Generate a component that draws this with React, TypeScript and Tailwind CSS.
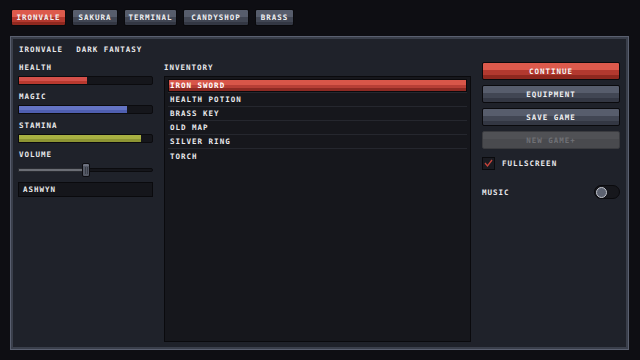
import React from "react";

const font = "font-['DejaVu_Sans_Mono',monospace] font-bold uppercase text-[7.5px] leading-[9px] tracking-[1px]";

const redBevel =
  "bg-[linear-gradient(to_bottom,#dc5a4c_0%,#dc5a4c_45%,#b3392f_45%,#b3392f_78%,#8f281f_78%)]";
const grayBevel =
  "bg-[linear-gradient(to_bottom,#575d6c_0%,#575d6c_45%,#414653_45%,#414653_78%,#333743_78%)]";

function Tab({ label, w, active }: { label: string; w: string; active?: boolean }) {
  return (
    <div
      className={`${w} h-[17px] flex items-center justify-center rounded-[2px] border border-[#0a0a0d] text-[#f0f0f2] ${
        active ? redBevel : grayBevel
      }`}
    >
      {label}
    </div>
  );
}

function Bar({ pct, fill }: { pct: number; fill: string }) {
  return (
    <div className="h-[9px] w-full rounded-r-[2px] border border-[#0b0b0e] bg-[#15161b] p-0">
      <div className={`h-full ${fill}`} style={{ width: `${pct}%` }} />
    </div>
  );
}

function Btn({ label, kind }: { label: string; kind: "red" | "gray" | "off" }) {
  const cls =
    kind === "red"
      ? `${redBevel} text-[#f3f3f5] border-[#0a0a0d]`
      : kind === "gray"
      ? `${grayBevel} text-[#f0f0f2] border-[#0a0a0d]`
      : "bg-[linear-gradient(to_bottom,#505155_0%,#505155_45%,#494a4e_45%)] text-[#707176] border-[#3a3b3f]";
  return (
    <div className={`h-[18px] w-full rounded-[2px] border flex items-center justify-center ${cls}`}>
      {label}
    </div>
  );
}

export default function App() {
  const items = ["Iron Sword", "Health Potion", "Brass Key", "Old Map", "Silver Ring", "Torch"];
  return (
    <div className={`w-[640px] h-[360px] bg-[#0e0e13] overflow-hidden ${font}`}>
      <div className="flex gap-[6px] pt-[9px] pl-[11px]">
        <Tab label="Ironvale" w="w-[55px]" active />
        <Tab label="Sakura" w="w-[46px]" />
        <Tab label="Terminal" w="w-[53px]" />
        <Tab label="Candyshop" w="w-[66px]" />
        <Tab label="Brass" w="w-[39px]" />
      </div>

      <div className="mt-[10px] ml-[10px] w-[619px] h-[314px] bg-[#5a6070] p-[1px]">
        <div className="h-full w-full border-2 border-[#3a3f4b] bg-[#1f222a] px-[5px] pt-[6px] pb-[5px] flex flex-col text-[#e9e9ec]">
          <div className="flex h-[8px] gap-[13px] pl-[1px]">
            <span>Ironvale</span>
            <span>Dark Fantasy</span>
          </div>

          <div className="mt-[9px] flex flex-1 min-h-0 gap-[11px]">
            {/* left column */}
            <div className="w-[135px] shrink-0 pt-[1px] flex flex-col">
              <div className="h-[8px] pl-[1px]">Health</div>
              <div className="mt-[5px]">
                <Bar pct={51} fill="bg-[linear-gradient(to_bottom,#d4504a_0%,#d4504a_60%,#b9392f_60%)]" />
              </div>
              <div className="mt-[7px] h-[8px] pl-[1px]">Magic</div>
              <div className="mt-[5px]">
                <Bar pct={81} fill="bg-[linear-gradient(to_bottom,#6474c4_0%,#6474c4_60%,#4f5fb0_60%)]" />
              </div>
              <div className="mt-[7px] h-[8px] pl-[1px]">Stamina</div>
              <div className="mt-[5px]">
                <Bar pct={92} fill="bg-[linear-gradient(to_bottom,#a8b042_0%,#a8b042_60%,#8d9533_60%)]" />
              </div>
              <div className="mt-[7px] h-[8px] pl-[1px]">Volume</div>
              <div className="mt-[5px] h-[14px] relative flex items-center">
                <div className="flex w-full h-[4px]">
                  <div className="h-full w-[50%] bg-[#6b6e75] border-y border-l border-[#2a2c32]" />
                  <div className="h-full flex-1 bg-[#15161b] border border-[#0b0b0e] rounded-r-[2px]" />
                </div>
                <div className="absolute left-[64px] top-0 h-[14px] w-[8px] rounded-[2px] border border-[#0c0c10] bg-[linear-gradient(to_bottom,#6d7280_0%,#6d7280_20%,#555a66_20%)] flex justify-center gap-[1px] pt-[3px]">
                  <div className="w-[1px] h-[7px] bg-[#3a3e48]" />
                  <div className="w-[1px] h-[7px] bg-[#3a3e48]" />
                </div>
              </div>
              <div className="mt-[5px] h-[15px] border border-[#0a0a0d] bg-[#15161b] flex items-center pl-[4px]">
                Ashwyn
              </div>
            </div>

            {/* middle column */}
            <div className="w-[307px] shrink-0 pt-[1px] flex flex-col">
              <div className="h-[8px]">Inventory</div>
              <div className="mt-[5px] flex-1 border border-[#0a0a0d] bg-[#16171c] px-[3px] pt-[2px]">
                <div className="flex flex-col divide-y divide-[#25272e]">
                  {items.map((it, i) => (
                    <div key={it} className="h-[14px]">
                      {i === 0 ? (
                        <div
                          className={`h-[13px] border border-[#0a0a0d] flex items-center pl-[1px] text-white bg-[linear-gradient(to_bottom,#d85649_0%,#d85649_42%,#b73f36_42%,#b73f36_75%,#8e2a23_75%)]`}
                        >
                          {it}
                        </div>
                      ) : (
                        <div className="h-full flex items-center pl-[2px]">{it}</div>
                      )}
                    </div>
                  ))}
                </div>
              </div>
            </div>

            {/* right column */}
            <div className="w-[138px] shrink-0 flex flex-col">
              <div className="flex flex-col gap-[5px]">
                <Btn label="Continue" kind="red" />
                <Btn label="Equipment" kind="gray" />
                <Btn label="Save Game" kind="gray" />
                <Btn label="New Game+" kind="off" />
              </div>
              <div className="mt-[8px] flex items-center gap-[7px]">
                <div className="w-[13px] h-[13px] border border-[#0a0a0d] bg-[#1a1b21] flex items-center justify-center">
                  <svg width="11" height="11" viewBox="0 0 11 11">
                    <polyline points="2,5 4.5,8 9,2" fill="none" stroke="#c8443b" strokeWidth="1.3" />
                  </svg>
                </div>
                <span>Fullscreen</span>
              </div>
              <div className="mt-[15px] flex items-center justify-between">
                <span>Music</span>
                <div className="w-[26px] h-[14px] rounded-full border border-[#0a0a0d] bg-[#16171c] flex items-center pl-[1px]">
                  <div className="w-[11px] h-[11px] rounded-full border border-[#c3c6cd] bg-[#5c6270]" />
                </div>
              </div>
            </div>
          </div>
        </div>
      </div>
    </div>
  );
}
